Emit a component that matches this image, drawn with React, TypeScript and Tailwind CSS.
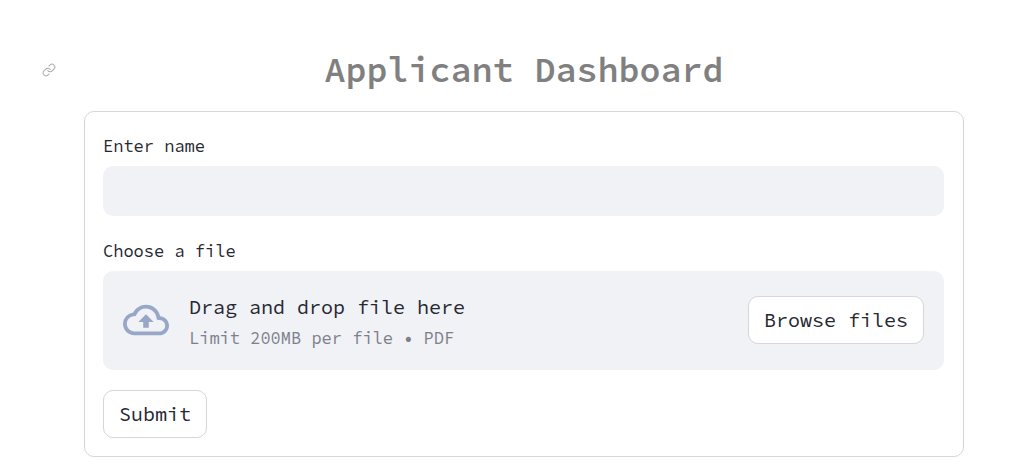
import { useRef, useState } from "react";
import type { ReactNode } from "react";
import { Link } from "lucide-react";
import { MdOutlineCloudUpload } from "react-icons/md";

function FieldLabel({ htmlFor, children }: { htmlFor: string; children: ReactNode }) {
  return (
    <label htmlFor={htmlFor} className="mb-1 block text-[17px] leading-[31px]">
      {children}
    </label>
  );
}

const buttonClass =
  "h-12 shrink-0 cursor-pointer rounded-[10px] border border-[#d6d6d9] bg-white px-[15px] text-xl";

export default function App() {
  const [name, setName] = useState("");
  const fileInput = useRef<HTMLInputElement>(null);

  return (
    <main className="min-h-screen bg-white pt-12 pb-4 font-['Source_Code_Pro','Liberation_Mono',monospace] text-[#262730]">
      <header className="flex items-center pr-[47px]">
        <div className="flex w-[84px] shrink-0 pl-[42px]">
          <a href="#applicant-dashboard" aria-label="Link to heading">
            <Link size={14} strokeWidth={1.75} className="text-[#adadad]" />
          </a>
        </div>
        <h1
          id="applicant-dashboard"
          className="flex-1 text-center text-[35px] leading-[44px] font-semibold text-[#808080]"
        >
          Applicant Dashboard
        </h1>
      </header>

      <form
        onSubmit={(event) => event.preventDefault()}
        className="mt-[19px] mr-[47px] ml-[84px] flex flex-col gap-5 rounded-[10px] border border-[#d6d6d9] pt-[19px] pr-[19px] pb-[18px] pl-[18px]"
      >
        <div>
          <FieldLabel htmlFor="name">Enter name</FieldLabel>
          <input
            id="name"
            type="text"
            value={name}
            onChange={(event) => setName(event.target.value)}
            className="block h-[50px] w-full rounded-[10px] bg-[#f0f2f6] px-4 text-xl outline-none"
          />
        </div>

        <div>
          <FieldLabel htmlFor="file">Choose a file</FieldLabel>
          <div className="flex items-center gap-5 rounded-[10px] bg-[#f0f2f6] px-5 pt-[14px] pb-4">
            <MdOutlineCloudUpload size={46} className="shrink-0 text-[#98a6c8]" />
            <div className="min-w-0 flex-1 pt-[7px]">
              <p className="text-xl leading-[30px]">Drag and drop file here</p>
              <p className="text-[17px] leading-8 text-[#7d808a]">
                Limit 200MB per file • PDF
              </p>
            </div>
            <input ref={fileInput} id="file" type="file" accept="application/pdf" className="hidden" />
            <button type="button" onClick={() => fileInput.current?.click()} className={buttonClass}>
              Browse files
            </button>
          </div>
        </div>

        <button type="submit" className={`${buttonClass} self-start`}>
          Submit
        </button>
      </form>
    </main>
  );
}
